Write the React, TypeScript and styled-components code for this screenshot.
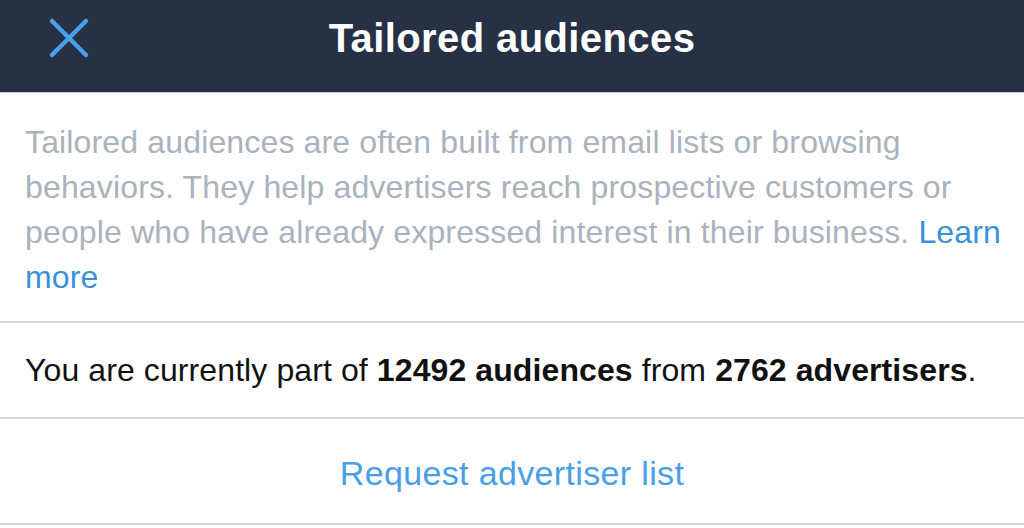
import React from "react";
import styled, { createGlobalStyle } from "styled-components";

const Global = createGlobalStyle`
  html, body { margin: 0; padding: 0; background: #ffffff; }
  body { font-family: "Liberation Sans", Arial, sans-serif; }
`;

const Page = styled.div`
  width: 1024px;
  height: 528px;
  overflow: hidden;
  background: #ffffff;
  display: flex;
  flex-direction: column;
`;

const Header = styled.header`
  height: 92px;
  flex: none;
  background: #263145;
  border-bottom: 1px solid #c9cdd2;
  display: flex;
  align-items: center;
  justify-content: center;
  position: relative;
`;

const CloseButton = styled.button`
  position: absolute;
  left: 47px;
  top: 17px;
  width: 44px;
  height: 44px;
  padding: 0;
  border: none;
  background: transparent;
  display: flex;
  align-items: center;
  justify-content: center;
`;

const Title = styled.h1`
  margin: 0 0 16px;
  color: #ffffff;
  font-family: "Liberation Sans", Arial, sans-serif;
  font-size: 40px;
  font-weight: 700;
  letter-spacing: 0.4px;
`;

const Description = styled.p`
  margin: 0;
  padding: 27px 16px 21px 25px;
  color: #a9b2bd;
  font-size: 32px;
  line-height: 45px;
  letter-spacing: 0.15px;
  border-bottom: 2px solid #d4d7da;
`;

const Link = styled.a`
  color: #3a8fd9;
  text-decoration: none;
`;

const Row = styled.div<{ $h: number; $center?: boolean }>`
  height: ${(p) => p.$h}px;
  flex: none;
  display: flex;
  align-items: center;
  justify-content: ${(p) => (p.$center ? "center" : "flex-start")};
  padding: 0 25px;
  border-bottom: 2px solid #d4d7da;
`;

const Summary = styled.span`
  color: #111111;
  font-size: 32px;
  letter-spacing: 0.1px;
  b { font-weight: 700; }
`;

const Action = styled.span`
  color: #4a9ee6;
  font-size: 34px;
  letter-spacing: 0.35px;
  margin-top: 4px;
`;

export default function App() {
  return (
    <>
      <Global />
      <Page>
        <Header>
          <CloseButton aria-label="Close">
            <svg width="44" height="44" viewBox="0 0 44 44">
              <path
                d="M5 4 L39 38 M39 4 L5 38"
                stroke="#4a9fe8"
                strokeWidth="4.5"
                strokeLinecap="round"
                fill="none"
              />
            </svg>
          </CloseButton>
          <Title>Tailored audiences</Title>
        </Header>
        <Description>
          Tailored audiences are often built from email lists or browsing
          behaviors. They help advertisers reach prospective customers or people
          who have already expressed interest in their business.{" "}
          <Link href="#">Learn more</Link>
        </Description>
        <Row $h={94}>
          <Summary>
            You are currently part of <b>12492 audiences</b> from{" "}
            <b>2762 advertisers</b>.
          </Summary>
        </Row>
        <Row $h={104} $center>
          <Action>Request advertiser list</Action>
        </Row>
      </Page>
    </>
  );
}
